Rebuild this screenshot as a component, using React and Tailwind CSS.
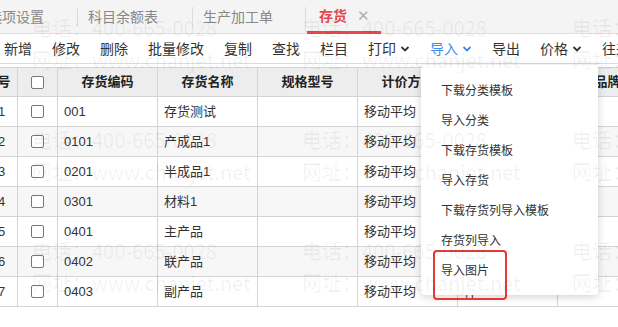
import React from "react";

const rows = [
  ["1", "001", "存货测试"],
  ["2", "0101", "产成品1"],
  ["3", "0201", "半成品1"],
  ["4", "0301", "材料1"],
  ["5", "0401", "主产品"],
  ["6", "0402", "联产品"],
  ["7", "0403", "副产品"],
];

const menuItems = [
  "下载分类模板",
  "导入分类",
  "下载存货模板",
  "导入存货",
  "下载存货列导入模板",
  "存货列导入",
  "导入图片",
];

const tools = [
  { label: "新增" },
  { label: "修改" },
  { label: "删除" },
  { label: "批量修改" },
  { label: "复制" },
  { label: "查找" },
  { label: "栏目" },
  { label: "打印", drop: true },
  { label: "导入", drop: true, active: true },
  { label: "导出" },
  { label: "价格", drop: true },
  { label: "往来" },
];

function Chevron() {
  return (
    <svg width="10" height="6" viewBox="0 0 10 6" className="ml-[4px] mt-[1px]">
      <path d="M1.5 1 L5 4.5 L8.5 1" fill="none" stroke="currentColor" strokeWidth="1.8" />
    </svg>
  );
}

function Checkbox() {
  return <span className="block w-[13px] h-[13px] rounded-[2px] border border-[#777] bg-white" />;
}

const cell = "shrink-0 h-full border-r border-[#d4d4d4] flex items-center";

export default function App() {
  const marks = [];
  [18, 130, 241].forEach((y) => {
    [32, 302, 572].forEach((x) => marks.push({ x, y }));
  });

  return (
    <div className="relative w-[618px] h-[327px] overflow-hidden bg-white text-[#333] font-['Liberation_Sans','Noto_Sans_CJK_SC',sans-serif]">
      {/* tabs */}
      <div className="flex items-center h-[34px] bg-[#f4f4f4] border-b border-[#dedede] text-[14px] leading-[20px] text-[#888] -ml-[12px]">
        <span className="w-[56px] shrink-0">选项设置</span>
        <span className="w-[33px]" />
        <span className="w-px h-[20px] bg-[#dcdcdc]" />
        <span className="w-[10px]" />
        <span className="w-[70px] shrink-0">科目余额表</span>
        <span className="w-[34px]" />
        <span className="w-px h-[20px] bg-[#dcdcdc]" />
        <span className="w-[10px]" />
        <span className="w-[70px] shrink-0">生产加工单</span>
        <span className="w-[32px]" />
        <span className="w-px h-[20px] bg-[#dcdcdc]" />
        <div className="flex items-center h-[34px] w-[74px] ml-[1px] pl-[12px] border-b-[3px] border-[#e5484d] pt-[2px]">
          <span className="text-[#e5484d] font-bold">存货</span>
          <span className="ml-[10px] text-[#b0b0b0] text-[15px]">✕</span>
        </div>
      </div>

      {/* toolbar */}
      <div className="flex items-center h-[30px] pl-[4px] gap-[20px] border-b border-[#dcdcdc] text-[14px] leading-[20px] whitespace-nowrap">
        {tools.map((t) => (
          <span key={t.label} className={`flex items-center shrink-0 ${t.active ? "text-[#3d8ee8]" : "text-[#333]"}`}>
            {t.label}
            {t.drop && <Chevron />}
          </span>
        ))}
      </div>

      {/* table */}
      <div className="mt-[3px] -ml-[22px] text-[13px] leading-[18px]">
        <div className="flex h-[30px] bg-[#ededed] border-y border-[#d4d4d4] font-bold text-[#222]">
          <div className={`${cell} w-[40px] justify-center`}>序号</div>
          <div className={`${cell} w-[40px] justify-center`}><Checkbox /></div>
          <div className={`${cell} w-[100px] justify-center`}>存货编码</div>
          <div className={`${cell} w-[100px] justify-center`}>存货名称</div>
          <div className={`${cell} w-[100px] justify-center`}>规格型号</div>
          <div className={`${cell} w-[100px] justify-center`}>计价方式</div>
          <div className={`${cell} w-[100px] justify-center`}>计量单位</div>
          <div className={`${cell} w-[100px] justify-center`}>品牌</div>
        </div>
        {rows.map((r, i) => (
          <div key={r[0]} className={`flex h-[30px] border-b border-[#d4d4d4] ${i % 2 ? "bg-[#f7f7f7]" : "bg-white"}`}>
            <div className={`${cell} w-[40px] justify-center pl-[8px]`}>{r[0]}</div>
            <div className={`${cell} w-[40px] justify-center`}><Checkbox /></div>
            <div className={`${cell} w-[100px] pl-[6px]`}>{r[1]}</div>
            <div className={`${cell} w-[100px] pl-[6px]`}>{r[2]}</div>
            <div className={`${cell} w-[100px]`} />
            <div className={`${cell} w-[100px] pl-[6px]`}>移动平均</div>
            <div className={`${cell} w-[100px] pl-[6px]`}>件</div>
            <div className={`${cell} w-[100px]`} />
          </div>
        ))}
      </div>

      {/* import dropdown */}
      <div className="absolute left-[421px] top-[65px] w-[177px] h-[230px] bg-white rounded-[4px] shadow-[0_2px_8px_rgba(0,0,0,0.18)] pt-[11px] text-[12px] leading-[16px] text-[#333]">
        {menuItems.map((m) => (
          <div key={m} className="h-[30px] flex items-center pl-[20px]">{m}</div>
        ))}
      </div>
      <div className="absolute left-[433px] top-[250px] w-[74px] h-[50px] border-2 border-[#e53935] rounded-[4px] pointer-events-none" />

      {/* watermark */}
      {marks.map((m, i) => (
        <div
          key={i}
          className="absolute pointer-events-none text-[20px] leading-[32px] whitespace-nowrap text-black/[0.06] font-['Noto_Sans_CJK_SC',sans-serif]"
          style={{ left: m.x, top: m.y - 6 }}
        >
          <div>电话：400-665-0028</div>
          <div>网址：www.chanjet.net</div>
        </div>
      ))}
    </div>
  );
}
